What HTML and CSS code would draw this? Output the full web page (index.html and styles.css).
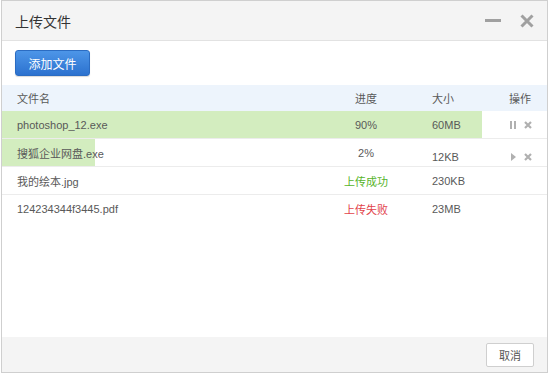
FILE: index.html
```html
<!DOCTYPE html>
<html lang="zh-CN">

<head>
    <meta charset="UTF-8" />
    <meta name="viewport" content="width=device-width, initial-scale=1.0" />
    <title>上传文件</title>
    <link rel="stylesheet" href="styles.css">
</head>

<body>
    <!-- 上传对话框 -->
    <div class="dialog">
        <div class="dialog-header">
            <h2>上传文件</h2>
            <div class="header-tools">
                <span class="tool-btn" title="最小化">
                    <svg width="16" height="14" viewBox="0 0 16 14"><rect x="0" y="5" width="16" height="3" fill="#a0a0a0" /></svg>
                </span>
                <span class="tool-btn" title="关闭">
                    <svg width="14" height="14" viewBox="0 0 14 14"><path d="M1.5 1.5 L12.5 12.5 M12.5 1.5 L1.5 12.5" stroke="#a0a0a0" stroke-width="3" /></svg>
                </span>
            </div>
        </div>

        <div class="toolbar">
            <button class="btn-add">添加文件</button>
        </div>

        <!-- 文件列表 -->
        <div class="file-table">
            <div class="row head">
                <span class="col-name">文件名</span>
                <span class="col-progress">进度</span>
                <span class="col-size">大小</span>
                <span class="col-ops">操作</span>
            </div>

            <div class="row">
                <div class="bar" style="width: 480px"></div>
                <span class="col-name">photoshop_12.exe</span>
                <span class="col-progress">90%</span>
                <span class="col-size">60MB</span>
                <span class="col-ops">
                    <svg class="op" width="8" height="8" viewBox="0 0 8 8"><rect x="1" y="0" width="2" height="8" fill="#b0b0b0" /><rect x="5" y="0" width="2" height="8" fill="#b0b0b0" /></svg>
                    <svg class="op" width="8" height="8" viewBox="0 0 8 8"><path d="M1 1 L7 7 M7 1 L1 7" stroke="#b0b0b0" stroke-width="2.2" /></svg>
                </span>
            </div>

            <div class="row">
                <div class="bar" style="width: 93px"></div>
                <span class="col-name">搜狐企业网盘.exe</span>
                <span class="col-progress">2%</span>
                <span class="col-size low">12KB</span>
                <span class="col-ops low">
                    <svg class="op" width="8" height="8" viewBox="0 0 8 8"><path d="M2 0 L7 4 L2 8 Z" fill="#b0b0b0" /></svg>
                    <svg class="op" width="8" height="8" viewBox="0 0 8 8"><path d="M1 1 L7 7 M7 1 L1 7" stroke="#b0b0b0" stroke-width="2.2" /></svg>
                </span>
            </div>

            <div class="row">
                <span class="col-name">我的绘本.jpg</span>
                <span class="col-progress ok">上传成功</span>
                <span class="col-size">230KB</span>
                <span class="col-ops"></span>
            </div>

            <div class="row last">
                <span class="col-name">124234344f3445.pdf</span>
                <span class="col-progress fail">上传失败</span>
                <span class="col-size">23MB</span>
                <span class="col-ops"></span>
            </div>
        </div>

        <div class="dialog-footer">
            <button class="btn-cancel">取消</button>
        </div>
    </div>
</body>
</html>
```

FILE: styles.css
```css
/* 页面基础 */
html,
body {
    margin: 0;
    padding: 0;
    background: #fff;
}

body {
    font-family: "Liberation Sans", "Noto Sans CJK SC", sans-serif;
    color: #595959;
}

/* 对话框外框 */
.dialog {
    box-sizing: border-box;
    width: 547px;
    height: 373px;
    margin-left: 1px;
    border: 1px solid #cfcfcf;
    display: flex;
    flex-direction: column;
    background: #fff;
}

/* 标题栏 */
.dialog-header {
    height: 39px;
    background: #f4f4f4;
    border-bottom: 1px solid #e2e2e2;
    display: flex;
    align-items: center;
    justify-content: space-between;
    padding: 0 13px 0 13px;
}

.dialog-header h2 {
    margin: 0;
    font-size: 14px;
    font-weight: normal;
    color: #333;
    line-height: 1;
    padding-top: 2px;
}

.header-tools {
    display: flex;
    align-items: center;
    gap: 19px;
}

.tool-btn {
    display: flex;
    cursor: pointer;
}

/* 工具栏 */
.toolbar {
    padding: 9px 13px 9px 13px;
}

.btn-add {
    width: 75px;
    height: 26px;
    border: 1px solid #2b6cc2;
    border-radius: 3px;
    background: linear-gradient(#4d96e8, #2c72cf);
    box-shadow: 0 1px 1px rgba(0, 0, 0, 0.15);
    color: #fff;
    font-family: inherit;
    font-size: 12px;
    padding: 0;
    cursor: pointer;
}

/* 文件列表 */
.file-table {
    flex: 1;
}

.row {
    position: relative;
    display: grid;
    grid-template-columns: 299px 100px 81px 1fr;
    align-items: center;
    height: 27px;
    padding-left: 15px;
    border-bottom: 1px solid #ececec;
    font-size: 11px;
}

.row.head {
    height: 26px;
    background: #edf4fc;
    border-bottom: none;
}

.row.last {
    border-bottom: none;
}

.row > span {
    position: relative;
    white-space: nowrap;
}

/* 上传进度条 */
.bar {
    position: absolute;
    left: 0;
    top: 0;
    bottom: 0;
    background: #d3edbf;
}

.col-progress {
    text-align: center;
}

.col-size {
    padding-left: 16px;
}

.col-ops {
    padding-left: 12px;
    display: flex;
    align-items: center;
    gap: 7px;
}

.low {
    top: 4px;
}

.ok {
    color: #56b42a;
}

.fail {
    color: #e2434a;
}

.op {
    cursor: pointer;
}

/* 底部 */
.dialog-footer {
    height: 35px;
    background: #f4f4f4;
    display: flex;
    justify-content: flex-end;
    align-items: flex-start;
    padding: 6px 13px 0 0;
    box-sizing: border-box;
}

.btn-cancel {
    width: 48px;
    height: 24px;
    border: 1px solid #cfcfcf;
    border-radius: 2px;
    background: #fff;
    color: #555;
    font-family: inherit;
    font-size: 11px;
    padding: 0;
    cursor: pointer;
}
```
